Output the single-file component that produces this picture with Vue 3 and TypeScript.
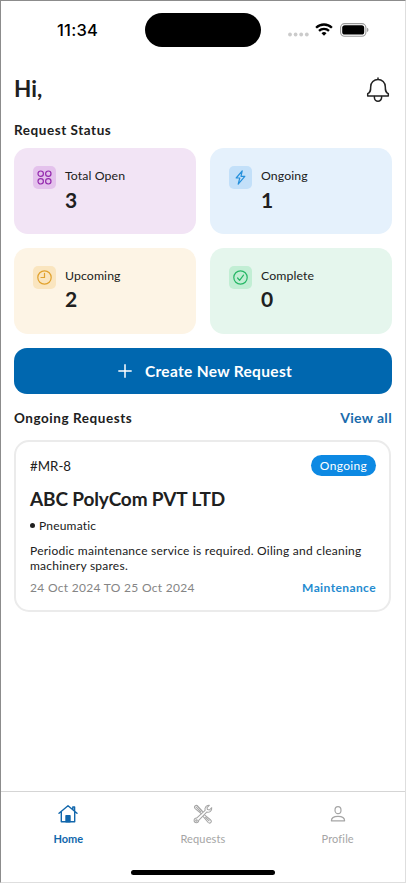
<script setup lang="ts">
interface Stat {
  id: 'open' | 'ongoing' | 'upcoming' | 'complete'
  label: string
  value: number
}

const stats: Stat[] = [
  { id: 'open', label: 'Total Open', value: 3 },
  { id: 'ongoing', label: 'Ongoing', value: 1 },
  { id: 'upcoming', label: 'Upcoming', value: 2 },
  { id: 'complete', label: 'Complete', value: 0 },
]
</script>

<template>
  <div class="screen">
    <div class="status-bar">
      <span class="time">11:34</span>
      <div class="island"></div>
      <div class="indicators">
        <svg class="dots" width="21" height="5" viewBox="0 0 21 5" fill="#cbcbcb">
          <circle cx="2" cy="2.5" r="1.9" /><circle cx="7.6" cy="2.5" r="1.9" />
          <circle cx="13.2" cy="2.5" r="1.9" /><circle cx="18.8" cy="2.5" r="1.9" />
        </svg>
        <svg class="wifi" width="18" height="13" viewBox="0 0 18 13" fill="none" stroke="#000" stroke-width="2.3">
          <path d="M1.1 4.7a11.3 11.3 0 0 1 15.8 0" />
          <path d="M4 7.9a7.2 7.2 0 0 1 10 0" />
          <path d="M9 12.7 6.5 10.2a3.6 3.6 0 0 1 5 0z" fill="#000" stroke="none" />
        </svg>
        <svg class="battery" width="29" height="14" viewBox="0 0 29 14">
          <rect x=".6" y=".6" width="25.3" height="12.6" rx="4" fill="none" stroke="#999" stroke-width="1.1" />
          <rect x="2.2" y="2.2" width="22" height="9.4" rx="2.6" />
          <path d="M27.2 4.8c1.6.6 1.6 3.6 0 4.2z" fill="#888" />
        </svg>
      </div>
    </div>

    <main class="content">
      <header class="greeting">
        <h1>Hi,</h1>
        <svg width="24" height="26" viewBox="0 0 24 26" fill="none" stroke="#222" stroke-width="1.5" stroke-linejoin="round" stroke-linecap="round">
          <path d="M12 1v1.500M4.700 9.700a7.300 7.300 0 0 1 14.600 0c0 4 .3 5.600 3 7v2.400H1.700v-2.400c2.700-1.400 3-3 3-7z" />
          <path d="M8.400 19.600v1a3.600 3.600 0 0 0 7.200 0v-1" />
        </svg>
      </header>

      <h2 class="status-title">Request Status</h2>

      <section class="stats">
        <article v-for="s in stats" :key="s.id" class="stat" :class="s.id">
          <div class="stat-icon">
            <svg v-if="s.id === 'open'" width="15" height="15" viewBox="0 0 15 15" fill="none" stroke="currentColor" stroke-width="1.2">
              <circle cx="3.700" cy="3.700" r="2.700" /><circle cx="11.300" cy="3.700" r="2.700" />
              <circle cx="3.700" cy="11.300" r="2.700" /><circle cx="11.300" cy="11.300" r="2.700" />
            </svg>
            <svg v-else-if="s.id === 'ongoing'" width="15" height="15" viewBox="0 0 15 15" fill="none" stroke="currentColor" stroke-width="1.200" stroke-linejoin="round">
              <path d="M9.200.8 3.200 8h3.600L5.200 14.200l6.600-7.900H8z" />
            </svg>
            <svg v-else-if="s.id === 'upcoming'" width="15" height="15" viewBox="0 0 15 15" fill="none" stroke="currentColor" stroke-width="1.200" stroke-linecap="round">
              <circle cx="7.500" cy="7.500" r="6.700" /><path d="M7.500 3.300v4.200H4" />
            </svg>
            <svg v-else width="15" height="15" viewBox="0 0 15 15" fill="none" stroke="currentColor" stroke-width="1.200" stroke-linecap="round" stroke-linejoin="round">
              <circle cx="7.500" cy="7.500" r="6.700" /><path d="m4.600 8 2 2.300 3.900-5.200" />
            </svg>
          </div>
          <div>
            <div class="stat-label">{{ s.label }}</div>
            <div class="stat-value">{{ s.value }}</div>
          </div>
        </article>
      </section>

      <button class="create" type="button">
        <svg width="14" height="14" viewBox="0 0 14 14" stroke="#fff" stroke-width="1.500"><path d="M7 .3v13.400M.3 7h13.400" /></svg>
        <span>Create New Request</span>
      </button>

      <div class="list-head">
        <h2>Ongoing Requests</h2>
        <a class="view-all">View all</a>
      </div>

      <article class="request">
        <div class="request-top">
          <span class="number">#MR-8</span>
          <span class="badge">Ongoing</span>
        </div>
        <h3>ABC PolyCom PVT LTD</h3>
        <div class="category"><i></i><span>Pneumatic</span></div>
        <p>Periodic maintenance service is required. Oiling and cleaning<br />machinery spares.</p>
        <div class="request-foot">
          <span class="dates">24 Oct 2024 TO 25 Oct 2024</span>
          <span class="kind">Maintenance</span>
        </div>
      </article>
    </main>

    <nav class="tabs">
      <div class="tab active">
        <svg width="20" height="20" viewBox="0 0 20 20" fill="none" stroke="currentColor" stroke-width="1.400" stroke-linejoin="round" stroke-linecap="round">
          <path d="M1 9.200 10 1.700l9 7.500M3.300 7.500v10.300h13.400V7.500M14.800 5.500V3h1.800v4" />
          <path d="M8 17.800v-6h4v6z" fill="currentColor" />
        </svg>
        <span>Home</span>
      </div>
      <div class="tab requests">
        <svg width="20" height="20" viewBox="0 0 20 20" fill="none" stroke="currentColor" stroke-width="1.050" stroke-linejoin="round" stroke-linecap="round">
          <path d="M8.200 9.700 2.200 4.600C.4 2.800 2.900.3 4.700 2l5.100 5.700M3 3l4.800 4.800M4.500 2.400 9 7.200" />
          <path d="M11.800 11.100 17.700 16c1.700 1.700-.8 4.200-2.500 2.500l-4.900-5.800M12.600 13.300l3.500 3.500" />
          <path d="m11.300 7.200.8-.8c-.7-2.500 1.100-5.400 4.200-5.100L14 3.600l.4 2 2 .4 2.300-2.300c.5 3-2.300 5.200-5 4.400l-8 8.200c.1 3.100-4.500 3.200-4.600.1 0-1.500 1.100-2.400 2.500-2.300z" />
          <circle cx="3.500" cy="16.500" r=".8" />
        </svg>
        <span>Requests</span>
      </div>
      <div class="tab profile">
        <svg width="20" height="20" viewBox="0 0 20 20" fill="none" stroke="currentColor" stroke-width="1.200" stroke-linejoin="round">
          <ellipse cx="10" cy="6.200" rx="3" ry="3.500" />
          <path d="M3.400 16.800c0-3 2.600-4.500 6.600-4.500s6.600 1.500 6.600 4.500z" />
        </svg>
        <span>Profile</span>
      </div>
    </nav>
    <div class="home-bar"></div>
  </div>
</template>

<style>
body {
  background: #fff;
}
</style>

<style scoped>
.screen {
  box-sizing: border-box;
  width: 406px;
  height: 883px;
  display: flex;
  flex-direction: column;
  border: 1px solid #dedede;
  border-top-color: #8c8c8c;
  border-left-color: #8c8c8c;
  background: #fff;
  color: #202020;
  font-family: Lato, "Liberation Sans", sans-serif;
  font-size: 13px;
  white-space: nowrap;
  overflow: hidden;
}
h1, h2, h3, p {
  margin: 0;
}
svg {
  display: block;
  flex: none;
}
.status-bar {
  display: flex;
  height: 59px;
  padding-top: 12px;
  box-sizing: border-box;
  flex: none;
}
.time {
  width: 88px;
  padding-left: 56px;
  font: 500 16.500px/34px Inter, sans-serif;
  letter-spacing: 0.250px;
  color: #000;
}
.island {
  width: 116px;
  height: 34px;
  border-radius: 17px;
  background: #000;
}
.indicators {
  display: flex;
  margin-left: 27px;
}
.dots {
  margin-top: 18.500px;
}
.wifi {
  margin: 10px 0 0 6px;
}
.battery {
  margin: 10px 0 0 7px;
}
.content {
  flex: 1;
  padding: 0 13px;
}
.greeting {
  display: flex;
  justify-content: space-between;
  height: 57px;
  padding-top: 16px;
  box-sizing: border-box;
}
h1 {
  font-size: 22.500px;
  line-height: 26px;
  font-weight: 700;
}
.greeting svg {
  margin: 1px 2px 0 0;
}
h2 {
  font-size: 13.500px;
  line-height: 20px;
  font-weight: 700;
  letter-spacing: 0.550px;
}
.status-title {
  margin-top: 3px;
}
.stats {
  display: grid;
  grid-template-columns: 182px 182px;
  grid-auto-rows: 86px;
  gap: 13.500px 14px;
  margin-top: 8px;
}
.stat {
  display: flex;
  gap: 9px;
  box-sizing: border-box;
  padding: 18px;
  border-radius: 14px;
}
.stat-icon {
  display: grid;
  place-items: center;
  width: 23px;
  height: 23px;
  margin-left: 1px;
  border-radius: 5px;
}
.open { background: #f2e4f5; }
.open .stat-icon { background: #e4c2ec; color: #952aae; }
.ongoing { background: #e5f1fc; }
.ongoing .stat-icon { background: #c3e0f9; color: #2590dc; }
.upcoming { background: #fdf4e5; }
.upcoming .stat-icon { background: #fae5bf; color: #e1a12c; }
.complete { background: #e5f6ed; }
.complete .stat-icon { background: #c2eed4; color: #25b765; }
.stat-label {
  font-size: 12.300px;
  line-height: 20px;
  letter-spacing: 0.100px;
}
.stat-value {
  margin-top: 0.500px;
  font-size: 21px;
  line-height: 26px;
  font-weight: 700;
}
.create {
  display: flex;
  align-items: center;
  justify-content: center;
  gap: 13px;
  width: 378px;
  height: 46px;
  margin-top: 14px;
  padding: 1px 0 0 4px;
  box-sizing: border-box;
  border: 0;
  border-radius: 13px;
  background: #0067af;
  color: #fff;
  font: 700 15.500px/20px Lato, sans-serif;
  letter-spacing: 0.320px;
}
.list-head {
  display: flex;
  justify-content: space-between;
  margin-top: 14px;
}
.view-all {
  color: #1a6bac;
  font-size: 14px;
  line-height: 20px;
  font-weight: 700;
  letter-spacing: 0.350px;
}
.request {
  box-sizing: border-box;
  width: 377px;
  height: 172px;
  margin-top: 12px;
  padding: 13px 13px 0 14px;
  border: 2px solid #ebebeb;
  border-radius: 15px;
}
.request-top {
  display: flex;
  align-items: center;
  justify-content: space-between;
  height: 22px;
}
.number {
  font-size: 13.300px;
}
.badge {
  width: 65px;
  height: 21px;
  border-radius: 11px;
  background: #0d89e3;
  color: #fff;
  line-height: 21px;
  font-size: 12px;
  letter-spacing: 0.350px;
  text-align: center;
}
h3 {
  margin-top: 9px;
  font-size: 19px;
  line-height: 26px;
  font-weight: 700;
  letter-spacing: -0.150px;
}
.category {
  display: flex;
  align-items: center;
  gap: 4px;
  height: 16px;
  margin-top: 5.500px;
  font-size: 12px;
  letter-spacing: 0.200px;
}
.category i {
  width: 5px;
  height: 5px;
  border-radius: 50%;
  background: #202020;
}
p {
  margin-top: 9.500px;
  font-size: 12px;
  line-height: 15px;
  letter-spacing: 0.240px;
}
.request-foot {
  display: flex;
  justify-content: space-between;
  margin-top: 7px;
  font-size: 12px;
  line-height: 16px;
}
.dates {
  color: #858585;
  letter-spacing: 0.300px;
}
.kind {
  color: #258bd0;
  font-weight: 700;
  letter-spacing: 0.400px;
}
.tabs {
  display: grid;
  grid-template-columns: repeat(3, 1fr);
  height: 79px;
  border-top: 1px solid #d5d5d5;
  box-sizing: border-box;
}
.tab {
  display: flex;
  flex-direction: column;
  align-items: center;
  padding-top: 12px;
  color: #a5a5a5;
  font-size: 11px;
  line-height: 16px;
  letter-spacing: 0.150px;
}
.tab span {
  margin-top: 7px;
}
.active {
  color: #1267ac;
  font-weight: 700;
}
.active span {
  letter-spacing: 0;
}
.home-bar {
  flex: none;
  width: 144px;
  height: 5px;
  margin: 0 auto 7px;
  border-radius: 3px;
  background: #000;
}
</style>
